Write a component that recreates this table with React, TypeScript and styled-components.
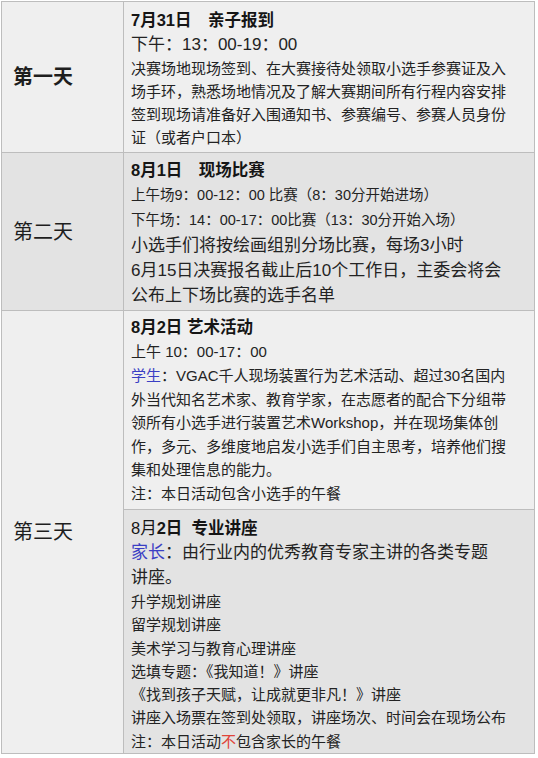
import styled, { createGlobalStyle } from 'styled-components'

const GlobalStyle = createGlobalStyle`
  html, body {
    margin: 0;
    padding: 0;
    background: #fff;
  }
  body {
    font-family: "Liberation Sans", "Noto Sans CJK SC", sans-serif;
    color: #232323;
  }
`

const Table = styled.div`
  display: grid;
  grid-template-columns: 122px 411px;
  width: max-content;
  margin: 1px 0 0 1px;
  border-top: 1px solid #bdbdbd;
  border-left: 1px solid #bdbdbd;
`

const Cell = styled.div<{ $shade?: boolean }>`
  box-sizing: border-box;
  border-right: 1px solid #bdbdbd;
  border-bottom: 1px solid #bdbdbd;
  background: ${p => (p.$shade ? '#e3e3e3' : '#efefef')};
`

const DayCell = styled(Cell)<{ $bold?: boolean; $span?: number }>`
  display: flex;
  align-items: center;
  padding-left: 11px;
  font-size: 20px;
  line-height: 26px;
  font-weight: ${p => (p.$bold ? 700 : 400)};
  color: #1e1e1e;
  grid-row: span ${p => p.$span ?? 1};
`

const Detail = styled(Cell)<{ $pt: number; $pb: number }>`
  padding: ${p => p.$pt}px 25px ${p => p.$pb}px 7px;
`

const Title = styled.div<{ $lh: number }>`
  font-size: 16.5px;
  font-weight: 700;
  line-height: ${p => p.$lh}px;
  color: #151515;
  white-space: pre;
`

const Thin = styled.span`
  font-weight: 400;
`

const Line = styled.div<{ $size: number; $lh: number }>`
  font-size: ${p => p.$size}px;
  line-height: ${p => p.$lh}px;
`

const Mark = styled.span<{ $tone: 'blue' | 'red' }>`
  color: ${p => (p.$tone === 'blue' ? '#3b3fc4' : '#e0443a')};
`

export default function App() {
  return (
    <>
      <GlobalStyle />
      <Table>
        <DayCell $bold>第一天</DayCell>
        <Detail $pt={7} $pb={3}>
          <Title $lh={23}>7月31日　亲子报到</Title>
          <Line $size={17} $lh={25}>下午：13：00-19：00</Line>
          <Line $size={15} $lh={23}>
            决赛场地现场签到、在大赛接待处领取小选手参赛证及入场手环，熟悉场地情况及了解大赛期间所有行程内容安排签到现场请准备好入围通知书、参赛编号、参赛人员身份证（或者户口本）
          </Line>
        </Detail>

        <DayCell $shade>第二天</DayCell>
        <Detail $shade $pt={5} $pb={2}>
          <Title $lh={25}>8月1日　现场比赛</Title>
          <Line $size={14.5} $lh={25}>上午场9：00-12：00 比赛（8：30分开始进场）</Line>
          <Line $size={14.5} $lh={25}>下午场：14：00-17：00比赛（13：30分开始入场）</Line>
          <Line $size={17} $lh={25}>小选手们将按绘画组别分场比赛，每场3小时</Line>
          <Line $size={17} $lh={25}>6月15日决赛报名截止后10个工作日，主委会将会公布上下场比赛的选手名单</Line>
        </Detail>

        <DayCell $span={2}>第三天</DayCell>
        <Detail $pt={4} $pb={4}>
          <Title $lh={24}>8月2日 艺术活动</Title>
          <Line $size={15} $lh={25}>上午 10：00-17：00</Line>
          <Line $size={15} $lh={23.5}>
            <Mark $tone="blue">学生</Mark>：VGAC千人现场装置行为艺术活动、超过30名国内外当代知名艺术家、教育学家，在志愿者的配合下分组带领所有小选手进行装置艺术Workshop，并在现场集体创作，多元、多维度地启发小选手们自主思考，培养他们搜集和处理信息的能力。
          </Line>
          <Line $size={15} $lh={23.5}>注：本日活动包含小选手的午餐</Line>
        </Detail>
        <Detail $shade $pt={6} $pb={0}>
          <Title $lh={24}>
            <Thin>8月</Thin>2日  专业讲座
          </Title>
          <Line $size={17} $lh={25}>
            <Mark $tone="blue">家长</Mark>：由行业内的优秀教育专家主讲的各类专题
            <br />
            讲座。
          </Line>
          <Line $size={15} $lh={23.3}>升学规划讲座</Line>
          <Line $size={15} $lh={23.3}>留学规划讲座</Line>
          <Line $size={15} $lh={23.3}>美术学习与教育心理讲座</Line>
          <Line $size={15} $lh={23.3}>选填专题：《我知道！》讲座</Line>
          <Line $size={15} $lh={23.3}>《找到孩子天赋，让成就更非凡！》讲座</Line>
          <Line $size={15} $lh={23.3}>讲座入场票在签到处领取，讲座场次、时间会在现场公布</Line>
          <Line $size={15} $lh={23.3}>
            注：本日活动<Mark $tone="red">不</Mark>包含家长的午餐
          </Line>
        </Detail>
      </Table>
    </>
  )
}
